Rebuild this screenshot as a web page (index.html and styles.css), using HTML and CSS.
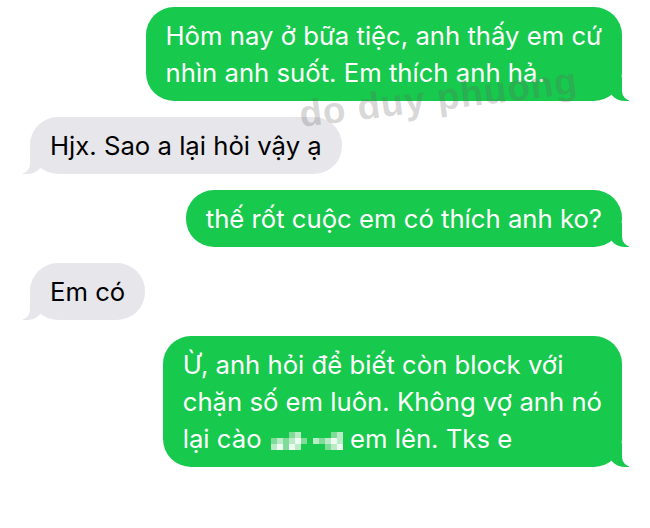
FILE: index.html
```html
<!DOCTYPE html>
<html lang="vi">
<head>
<meta charset="UTF-8">
<meta name="viewport" content="width=device-width, initial-scale=1.0">
<title>Tin nhắn</title>
<link rel="stylesheet" href="styles.css">
</head>
<body>
    <div id="thread">
        <div class="msg sent">Hôm nay ở bữa tiệc, anh thấy em cứ<br>nhìn anh suốt. Em thích anh hả.</div>
        <div class="msg recv">Hjx. Sao a lại hỏi vậy ạ</div>
        <div class="msg sent">thế rốt cuộc em có thích anh ko?</div>
        <div class="msg recv">Em có</div>
        <div class="msg sent">Ừ, anh hỏi để biết còn block với<br>chặn số em luôn. Không vợ anh nó<br>lại cào
            <span class="mosaic">
                <i></i><i></i><i></i><i class="p1"></i><i class="p2"></i><i></i>
                <i class="p1"></i><i class="p2"></i><i class="p1"></i><i class="p2"></i><i class="p3"></i><i class="p1"></i>
                <i class="p2"></i><i class="p3"></i><i class="p1"></i><i class="p3"></i><i class="p2"></i><i></i>
            </span><span class="mosaic short">
                <i></i><i></i><i></i><i class="p1"></i><i class="p2"></i>
                <i class="p2"></i><i class="p1"></i><i class="p2"></i><i class="p3"></i><i class="p2"></i>
                <i></i><i></i><i class="p1"></i><i class="p2"></i><i class="p3"></i>
            </span> em lên. Tks e</div>
    </div>
    <div id="watermark">do duy phuong</div>
</body>
</html>
```

FILE: styles.css
```css
body {
    margin: 0;
    background: #fff;
    position: relative;
    font-family: "Inter", "Noto Sans", sans-serif;
}
#thread {
    display: flex;
    flex-direction: column;
    gap: 16px;
    padding: 7px 28px 7px 30px;
}
.msg {
    position: relative;
    padding: 10px 20px;
    border-radius: 28px;
    font-size: 25.7px;
    line-height: 37px;
}
.msg::before, .msg::after {
    content: "";
    position: absolute;
    bottom: 0;
    height: 24px;
}
.sent {
    align-self: flex-end;
    background: #17c94c;
    color: #fff;
}
.sent::before {
    right: -7px;
    width: 20px;
    background: #17c94c;
    border-bottom-left-radius: 16px 14px;
}
.sent::after {
    right: -26px;
    width: 26px;
    background: #fff;
    border-bottom-left-radius: 10px;
}
.recv {
    align-self: flex-start;
    background: #e6e6eb;
    color: #000;
}
.recv::before {
    left: -7px;
    width: 20px;
    background: #e6e6eb;
    border-bottom-right-radius: 16px 14px;
}
.recv::after {
    left: -26px;
    width: 26px;
    background: #fff;
    border-bottom-right-radius: 10px;
}
/* pixelated word */
.mosaic {
    display: inline-grid;
    grid-template-columns: repeat(6, 6px);
    grid-auto-rows: 6px;
    vertical-align: middle;
    margin-left: 2px;
}
.mosaic.short {
    grid-template-columns: repeat(5, 6px);
    margin-left: 6px;
}
.mosaic i {
    background: #17c94c;
}
.mosaic i.p1 { background: #7fdc98; }
.mosaic i.p2 { background: #b9ecc6; }
.mosaic i.p3 { background: #eefaf1; }
#watermark {
    position: absolute;
    left: 302px;
    top: 94px;
    font-family: "Liberation Sans", sans-serif;
    font-weight: bold;
    font-size: 37px;
    letter-spacing: 1px;
    color: rgba(100, 100, 100, 0.25);
    transform: rotate(-7deg);
    transform-origin: left bottom;
    white-space: nowrap;
}
```
